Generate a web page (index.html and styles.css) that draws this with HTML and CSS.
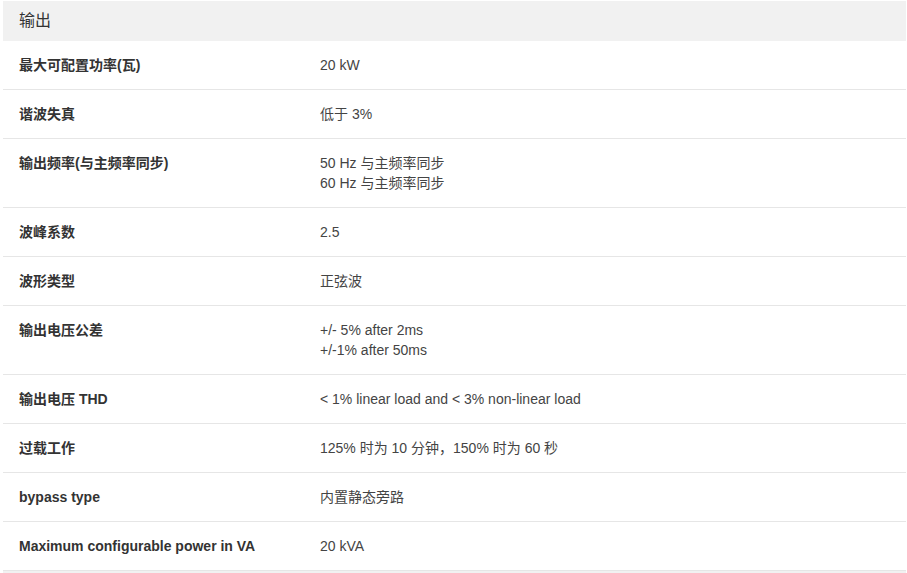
FILE: index.html
```html
<!DOCTYPE html>
<html lang="zh-CN">
<head>
<meta charset="utf-8">
<title>输出</title>
<link rel="stylesheet" href="styles.css">
</head>
<body>
<section class="spec">
  <h2 class="spec-head">输出</h2>
  <div class="row"><div class="label">最大可配置功率(瓦)</div><div class="value">20 kW</div></div>
  <div class="row"><div class="label">谐波失真</div><div class="value">低于 3%</div></div>
  <div class="row"><div class="label">输出频率(与主频率同步)</div><div class="value">50 Hz 与主频率同步<br>60 Hz 与主频率同步</div></div>
  <div class="row"><div class="label">波峰系数</div><div class="value">2.5</div></div>
  <div class="row"><div class="label">波形类型</div><div class="value">正弦波</div></div>
  <div class="row"><div class="label">输出电压公差</div><div class="value">+/- 5% after 2ms<br>+/-1% after 50ms</div></div>
  <div class="row"><div class="label">输出电压 THD</div><div class="value">&lt; 1% linear load and &lt; 3% non-linear load</div></div>
  <div class="row"><div class="label">过载工作</div><div class="value">125% 时为 10 分钟，150% 时为 60 秒</div></div>
  <div class="row"><div class="label">bypass type</div><div class="value">内置静态旁路</div></div>
  <div class="row"><div class="label">Maximum configurable power in VA</div><div class="value">20 kVA</div></div>
  <div class="spec-foot"></div>
</section>
</body>
</html>
```
FILE: styles.css
```css
html, body {
  margin: 0;
  padding: 0;
  background: #fff;
}
body {
  padding: 1px 1px 0 3px;
  font-family: "Liberation Sans", Arial, "Noto Sans CJK SC", sans-serif;
  font-size: 14px;
  line-height: 20px;
  color: #333;
}
.spec {
  display: flex;
  flex-direction: column;
}
.spec-head {
  margin: 0;
  height: 40px;
  padding: 0 16px;
  display: flex;
  align-items: center;
  background: #f1f1f1;
  font-size: 16px;
  font-weight: normal;
  color: #333;
}
.row {
  display: grid;
  grid-template-columns: 317px 1fr;
  border-bottom: 1px solid #e6e6e6;
}
.label {
  padding: 14px 16px;
  font-weight: bold;
  color: #333;
}
.value {
  padding: 14px 0;
  color: #444;
}
.spec-foot {
  height: 6px;
  background: #f1f1f1;
}
```
